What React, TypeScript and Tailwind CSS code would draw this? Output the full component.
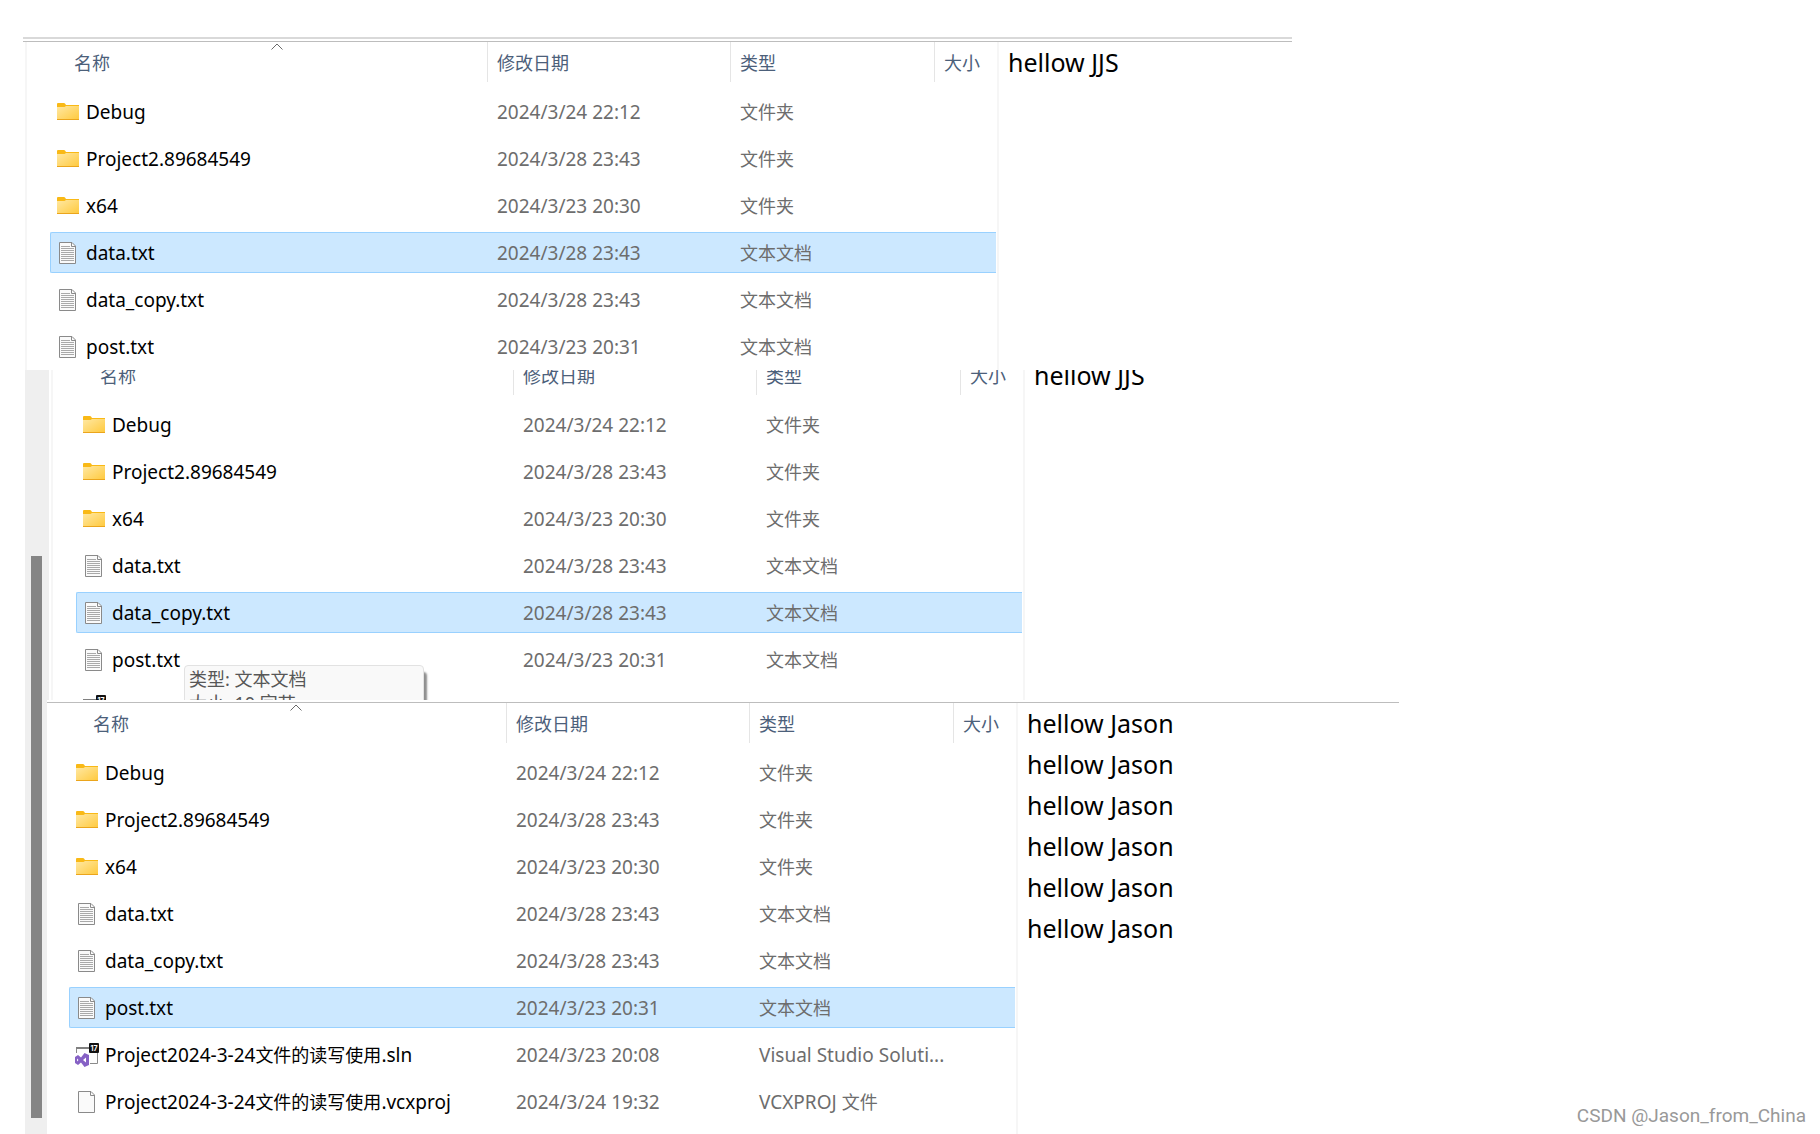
import React from "react";

type Kind = "folder" | "text" | "solution" | "blank";

type Entry = { name: string; date: string; type: string; kind: Kind };

const entries: Entry[] = [
  { name: "Debug",                              date: "2024/3/24 22:12", type: "文件夹",                  kind: "folder"   },
  { name: "Project2.89684549",                  date: "2024/3/28 23:43", type: "文件夹",                  kind: "folder"   },
  { name: "x64",                                date: "2024/3/23 20:30", type: "文件夹",                  kind: "folder"   },
  { name: "data.txt",                           date: "2024/3/28 23:43", type: "文本文档",                kind: "text"     },
  { name: "data_copy.txt",                      date: "2024/3/28 23:43", type: "文本文档",                kind: "text"     },
  { name: "post.txt",                           date: "2024/3/23 20:31", type: "文本文档",                kind: "text"     },
  { name: "Project2024-3-24文件的读写使用.sln",     date: "2024/3/23 20:08", type: "Visual Studio Soluti...", kind: "solution" },
  { name: "Project2024-3-24文件的读写使用.vcxproj", date: "2024/3/24 19:32", type: "VCXPROJ 文件",            kind: "blank"    },
];

function FolderIcon() {
  return (
    <svg width="22" height="17" viewBox="0 0 22 17" aria-hidden="true">
      <defs>
        <linearGradient id="folder" x1="0" y1="0" x2="1" y2="1">
          <stop offset="0" stopColor="#ffe8a3" />
          <stop offset="1" stopColor="#ffc93c" />
        </linearGradient>
      </defs>
      <path d="M0 1q0-1 1-1h6q.6 0 1 .6L9 2h13v3H0z" fill="#f9b916" />
      <path d="M0 4h7.500l1.500-1H22v14H0z" fill="url(#folder)" />
      <path d="M0 16h22v1H0z" fill="#eba51c" />
    </svg>
  );
}

function PageIcon({ lined }: { lined?: boolean }) {
  return (
    <svg width="18" height="22" viewBox="0 0 18 22" aria-hidden="true">
      <path d="M.5.500H13L16.500 4v17.500H.500z" fill="#fafafa" stroke="#8a8a8a" />
      <path d="M12.500.500v4h4" fill="none" stroke="#8a8a8a" />
      {lined && (
        <path
          d="M2 4.500h9M2 6.500h13M2 8.500h13M2 10.500h13M2 12.500h13M2 14.500h13M2 16.500h13M2 18.500h13"
          stroke="#a9a9a9"
        />
      )}
    </svg>
  );
}

function SolutionIcon() {
  return (
    <svg width="24" height="24" viewBox="0 0 24 24" aria-hidden="true">
      <path d="M1.500 4.500h21v16h-21z" fill="#fdfdfd" stroke="#8a8a8a" />
      <path d="M1 4h15v2H1z" fill="#808080" />
      <path d="M0 10h15v14H0z" fill="#fff" />
      <path d="M1.500 10V6" stroke="#8a8a8a" />
      <path
        fillRule="evenodd"
        d="M0 14l3-2 3 2.500L9.500 10 14 12v10l-4.500 2L6 19.500 3 22l-3-2zM2 15.500v3l1.500-1.500zM8 17l3 2.500v-5z"
        fill="#8661c5"
      />
      <rect x="14" y="0" width="10" height="10" rx="1" fill="#111" />
      <text x="19" y="8" textAnchor="middle" fontSize="7" fontWeight="700" fontFamily="Inter, sans-serif" fill="#fff">
        17
      </text>
    </svg>
  );
}

function FileIcon({ kind }: { kind: Kind }) {
  return (
    <span className="flex w-6 shrink-0 items-center justify-center">
      {kind === "folder" && <FolderIcon />}
      {kind === "text" && <PageIcon lined />}
      {kind === "blank" && <PageIcon />}
      {kind === "solution" && <SolutionIcon />}
    </span>
  );
}

// Chinese runs are set one pixel smaller than the Latin text beside them
function Label({ text }: { text: string }) {
  return (
    <>
      {text.split(/([\u4e00-\u9fff]+)/).map((part, i) =>
        i % 2 ? <span key={i} className="text-[18px]">{part}</span> : part
      )}
    </>
  );
}

function Heading({ children, first, sorted }: { children: string; first?: boolean; sorted?: boolean }) {
  return (
    <th scope="col" className="h-[43px] p-0 text-left align-top font-normal">
      <div
        className={`relative flex h-10 items-center pt-[2px] text-[18px] text-[#4c607a] ${
          first ? "pl-6" : "border-l border-[#e5e5e5] pl-[9px]"
        }`}
      >
        {children}
        {sorted && (
          <svg className="absolute left-[221px] top-px" width="12" height="7" viewBox="0 0 12 7" aria-hidden="true">
            <path d="M.5 6.500L6 1l5.500 5.500" fill="none" stroke="#6a6a6a" />
          </svg>
        )}
      </div>
    </th>
  );
}

// `peek` adds a last row of which only the icon shows
function FileTable({ count, selected, peek }: { count: number; selected: string; peek?: Kind }) {
  return (
    <table className="-mt-[6px] w-[946px] table-fixed border-separate border-spacing-x-0 border-spacing-y-[6px]">
      <colgroup>
        <col className="w-[437px]" />
        <col className="w-[243px]" />
        <col className="w-[204px]" />
        <col className="w-[62px]" />
      </colgroup>
      <thead>
        <tr>
          <Heading first sorted>名称</Heading>
          <Heading>修改日期</Heading>
          <Heading>类型</Heading>
          <Heading>大小</Heading>
        </tr>
      </thead>
      <tbody className="text-[19px] text-[#6d6d6d]">
        {entries.slice(0, count).map((e) => {
          const cell = e.name === selected ? "border-y border-[#99d1ff] bg-[#cce8ff]" : "border-y border-transparent";
          return (
            <tr key={e.name} className="h-[41px] whitespace-nowrap leading-6">
              <td className={`rounded-l-xs border-l p-0 pl-[5px] text-black ${cell}`}>
                <div className="flex items-center gap-[6px]">
                  <FileIcon kind={e.kind} />
                  <span><Label text={e.name} /></span>
                </div>
              </td>
              <td className={`p-0 pl-[10px] ${cell}`}>{e.date}</td>
              <td className={`p-0 pl-[10px] ${cell}`}><Label text={e.type} /></td>
              <td className={`p-0 ${cell}`} />
            </tr>
          );
        })}
        {peek && (
          <tr className="h-[41px]">
            <td colSpan={4} className="p-0 pl-[6px]"><FileIcon kind={peek} /></td>
          </tr>
        )}
      </tbody>
    </table>
  );
}

function Preview({ lines }: { lines: string[] }) {
  return (
    <div className="pl-[9px] text-[25px] leading-[41px] text-black">
      {lines.map((line, i) => (
        <p key={i}>{line}</p>
      ))}
    </div>
  );
}

function ListPane({ children }: { children: React.ReactNode }) {
  return <div className="shrink-0 border-r-2 border-[#f6f6f6] pr-px">{children}</div>;
}

export default function App() {
  return (
    <main className="relative flex min-h-screen flex-col overflow-hidden bg-white pt-[37px] font-['Noto_Sans','Noto_Sans_CJK_SC',sans-serif]">
      {/* data.txt selected */}
      <section className="h-[333px] overflow-hidden pl-[23px]">
        <div className="h-[5px] max-w-[1269px] border-b border-t-2 border-b-[#bdbdbd] border-t-[#d9d9d9]" />
        <div className="ml-[2px] flex h-full border-l-2 border-[#f6f6f6] pl-[23px]">
          <ListPane>
            <FileTable count={6} selected="data.txt" />
          </ListPane>
          <Preview lines={["hellow JJS"]} />
        </div>
      </section>

      <div className="flex flex-1 pl-[25px]">
        {/* scroll bar shared by the two lower lists */}
        <div className="flex w-[22px] shrink-0 flex-col bg-[#efefef] pb-4 pl-[6px] pr-[5px] pt-[186px]">
          <div className="flex-1 bg-[#858585]" />
        </div>

        <div className="flex flex-1 flex-col">
          {/* data_copy.txt selected, scrolled a little under the list above */}
          <section className="relative mb-[2px] flex h-[330px] overflow-hidden border-l-2 border-[#efefef] pl-[2px]">
            <div className="-mt-[15px] flex border-l-2 border-[#f6f6f6] pl-[23px]">
              <ListPane>
                <FileTable count={6} selected="data_copy.txt" peek="solution" />
              </ListPane>
              <Preview lines={["hellow JJS"]} />
            </div>
            <div
              role="tooltip"
              className="absolute left-[135px] top-[295px] w-[240px] rounded-t-sm border border-[#e2e2e2] bg-[#f9f9f9] pl-1 pt-px text-[18px] leading-6 text-[#575757] shadow-[3px_7px_2px_#8f8f8f]"
            >
              <p>类型: 文本文档</p>
              <p>大小: 10 字节</p>
            </div>
          </section>

          {/* post.txt selected */}
          <section className="flex flex-1 flex-col">
            <div className="max-w-[1352px] border-t border-[#bdbdbd]" />
            <div className="flex flex-1 pl-[22px]">
              <ListPane>
                <FileTable count={8} selected="post.txt" />
              </ListPane>
              <Preview lines={Array(6).fill("hellow Jason")} />
            </div>
          </section>
        </div>
      </div>

      <p className="absolute bottom-[6px] right-[14px] font-['Roboto',sans-serif] text-[19px] leading-6 text-[#999999]">
        CSDN @Jason_from_China
      </p>
    </main>
  );
}
